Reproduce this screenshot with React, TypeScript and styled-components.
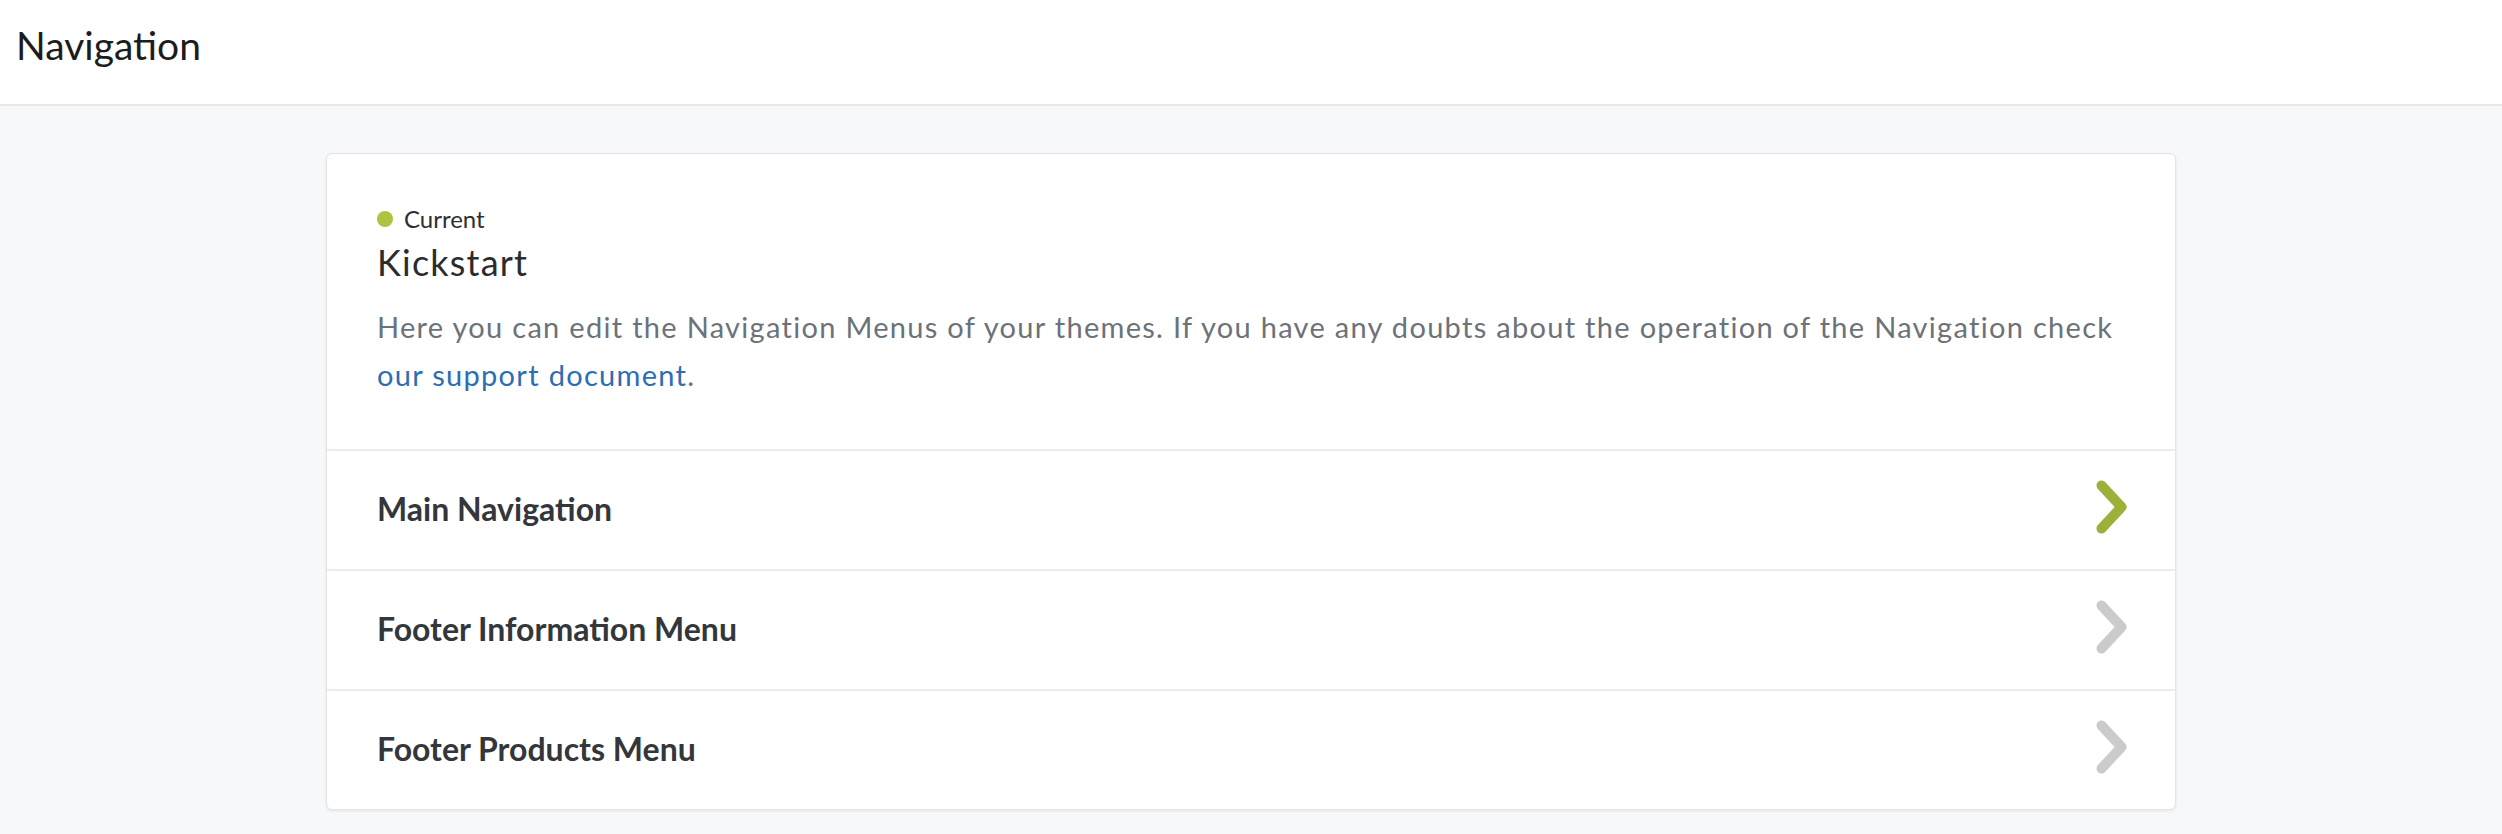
import React from "react";
import styled, { createGlobalStyle } from "styled-components";

const GlobalStyle = createGlobalStyle`
  html, body { margin: 0; padding: 0; background: #f7f8fa; }
  body { font-family: Lato, "Liberation Sans", Arial, sans-serif; }
  * { box-sizing: border-box; }
`;

const Page = styled.div`
  min-height: 834px;
  background: #f7f8fa;
`;

const Header = styled.header`
  height: 106px;
  padding: 26px 16px 0;
  background: #ffffff;
  border-bottom: 2px solid #e8e9ed;
`;

const PageTitle = styled.h1`
  margin: 0;
  font-size: 39px;
  line-height: 39px;
  font-weight: 400;
  color: #1c1c1e;
`;

const Main = styled.main`
  padding-top: 47px;
`;

const Card = styled.section`
  width: 1850px;
  margin: 0 auto;
  background: #ffffff;
  border: 1px solid #e3e4e8;
  border-radius: 6px;
  box-shadow: 0 1px 3px rgba(0, 0, 0, 0.08);
  overflow: hidden;
`;

const Intro = styled.div`
  padding: 50px 48px 50px 50px;
`;

const Status = styled.div`
  display: flex;
  align-items: center;
  gap: 11px;
  height: 30px;
  font-size: 24px;
  line-height: 30px;
  color: #2e2f33;
`;

const Dot = styled.span`
  width: 16px;
  height: 16px;
  border-radius: 50%;
  background: #afc43c;
`;

const ThemeName = styled.h2`
  margin: 6px 0 0;
  font-size: 36px;
  line-height: 44px;
  font-weight: 400;
  letter-spacing: 1.2px;
  color: #2b2c30;
`;

const Description = styled.p`
  margin: 19px 0 0;
  font-size: 29px;
  line-height: 48px;
  letter-spacing: 1.3px;
  color: #6c7279;
`;

const Link = styled.a`
  color: #2c6db4;
  text-decoration: none;
`;

const Row = styled.div`
  display: flex;
  align-items: center;
  justify-content: space-between;
  height: 120px;
  padding: 0 47px 4px 50px;
  border-top: 2px solid #ececf0;
`;

const RowTitle = styled.span`
  font-size: 32px;
  font-weight: 700;
  color: #33373c;
`;

const ChevronSvg = styled.svg`
  display: block;
  width: 33px;
  height: 56px;
  margin-top: -2px;
`;

const Chevron = ({ active }: { active: boolean }) => (
  <ChevronSvg viewBox="0 0 33 56">
    <polyline
      points="6.5,6.5 26.5,28 6.5,49.5"
      fill="none"
      stroke={active ? "#9db13a" : "#cbcbcb"}
      strokeWidth={10}
      strokeLinecap="round"
      strokeLinejoin="round"
    />
  </ChevronSvg>
);

const menus = [
  { name: "Main Navigation", active: true },
  { name: "Footer Information Menu", active: false },
  { name: "Footer Products Menu", active: false },
];

export default function App() {
  return (
    <>
      <GlobalStyle />
      <Page>
        <Header>
          <PageTitle>Navigation</PageTitle>
        </Header>
        <Main>
          <Card>
            <Intro>
              <Status>
                <Dot />
                Current
              </Status>
              <ThemeName>Kickstart</ThemeName>
              <Description>
                Here you can edit the Navigation Menus of your themes. If you have any doubts about the operation of the Navigation check{" "}
                <Link href="#">our support document</Link>.
              </Description>
            </Intro>
            {menus.map((m) => (
              <Row key={m.name}>
                <RowTitle>{m.name}</RowTitle>
                <Chevron active={m.active} />
              </Row>
            ))}
          </Card>
        </Main>
      </Page>
    </>
  );
}
